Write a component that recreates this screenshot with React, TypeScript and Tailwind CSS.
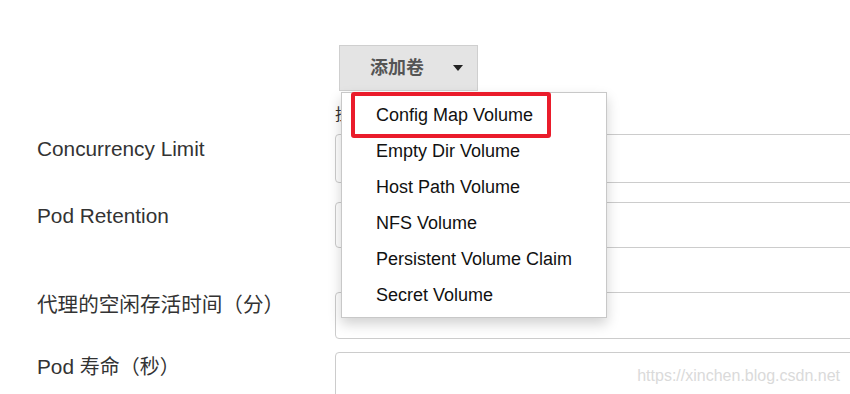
import React from "react";

const items = [
  "Config Map Volume",
  "Empty Dir Volume",
  "Host Path Volume",
  "NFS Volume",
  "Persistent Volume Claim",
  "Secret Volume",
];

export default function App() {
  return (
    <div
      className="relative w-[850px] h-[394px] overflow-hidden bg-white text-[#333]"
      style={{ fontFamily: '"Liberation Sans", "Noto Sans CJK SC", sans-serif' }}
    >
      {/* Top: add volume button */}
      <div className="pt-[45px] pl-[339px]">
        <div className="relative w-[139px]">
          <button className="flex h-[46px] w-[139px] items-center border border-[#cfcfcf] bg-[#e4e4e4] pl-[30px] text-[18px] font-bold text-[#555]">
            <span className="leading-none">添加卷</span>
            <span className="ml-[29px] h-0 w-0 border-x-[5px] border-t-[6px] border-x-transparent border-t-[#222]" />
          </button>

          {/* dropdown menu */}
          <div className="absolute left-[2px] top-[47px] z-20 w-[266px] border border-[#c8c8c8] bg-white py-[4px] shadow-[0_6px_12px_rgba(0,0,0,0.18)]">
            {items.map((t) => (
              <div
                key={t}
                className="flex h-[36px] items-center pl-[34px] text-[18px] text-[#111]"
              >
                {t}
              </div>
            ))}
            <div className="absolute left-[9px] top-[-1px] h-[46px] w-[200px] rounded-[3px] border-[4px] border-[#ea1c2b]" />
          </div>
        </div>
      </div>

      {/* help text mostly hidden under the menu */}
      <div className="mt-[14px] pl-[335px] text-[16px] leading-[20px] text-[#333]">
        挂载
      </div>

      {/* form rows */}
      <div className="mt-[9px] flex flex-col">
        <div className="flex h-[49px]">
          <div className="w-[335px] shrink-0 pl-[37px] text-[20.8px] leading-[29px]">Concurrency Limit</div>
          <div className="h-[49px] w-[600px] shrink-0 rounded-[4px] border border-[#cccccc]" />
        </div>
        <div className="mt-[19px] flex h-[46px]">
          <div className="w-[335px] shrink-0 pl-[37px] text-[20.8px] leading-[28px]">Pod Retention</div>
          <div className="h-[46px] w-[600px] shrink-0 rounded-[4px] border border-[#cccccc]" />
        </div>
        <div className="mt-[44px] flex h-[47px]">
          <div className="w-[335px] shrink-0 pl-[37px] text-[20.6px] leading-[26px]">代理的空闲存活时间（分）</div>
          <div className="h-[47px] w-[600px] shrink-0 rounded-[4px] border border-[#cccccc]" />
        </div>
        <div className="mt-[13px] flex h-[60px]">
          <div className="w-[335px] shrink-0 pl-[37px] text-[20.8px] leading-[30px]">
            Pod <span className="text-[20px]">寿命（秒）</span>
          </div>
          <div className="h-[60px] w-[600px] shrink-0 rounded-[4px] border border-[#cccccc]" />
        </div>
      </div>

      {/* watermark */}
      <div className="absolute right-[10px] top-[366px] text-[16px] leading-[20px] text-[#dadada]">
        https://xinchen.blog.csdn.net
      </div>
    </div>
  );
}
